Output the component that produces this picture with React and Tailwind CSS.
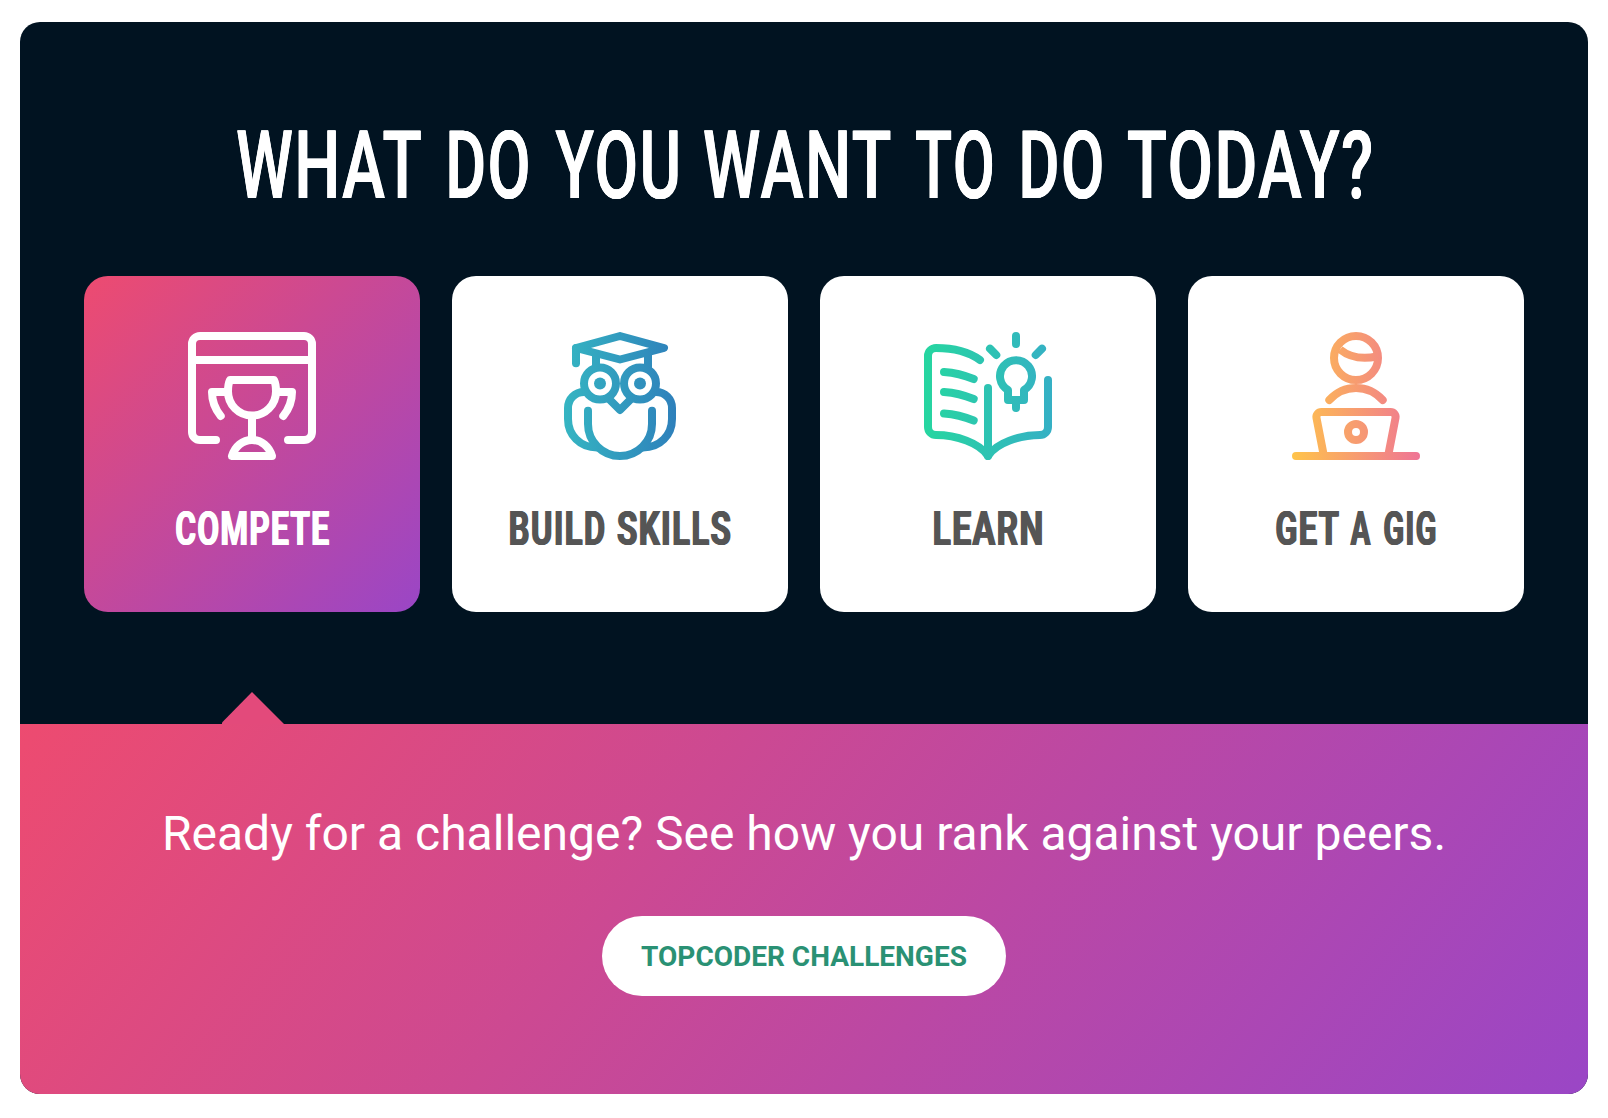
import { useLayoutEffect, useRef } from "react";

// Condenses a word so that its ink fills the width set by `className`.
// `edge` is the thickness in pixels that a text shadow adds to each side of a glyph.
function Word({ children, className, edge = 1 }) {
  const box = useRef(null);
  const glyphs = useRef(null);

  useLayoutEffect(() => {
    const style = getComputedStyle(glyphs.current);
    const ctx = document.createElement("canvas").getContext("2d");
    ctx.font = `${style.fontWeight} ${style.fontSize} ${style.fontFamily}`;
    const m = ctx.measureText(children);
    const spacing = (parseFloat(style.letterSpacing) || 0) * (children.length - 1);
    const left = m.actualBoundingBoxLeft + edge;
    const ink = left + m.actualBoundingBoxRight + edge + spacing;
    const width = box.current.getBoundingClientRect().width;
    glyphs.current.style.transform = `scaleX(${width / ink}) translateX(${left}px)`;
  }, [children, edge]);

  return (
    <span ref={box} className={`block shrink-0 ${className}`}>
      <span
        ref={glyphs}
        className="inline-block origin-left whitespace-nowrap"
        style={{ textShadow: `${edge}px 0 currentColor, ${-edge}px 0 currentColor` }}
      >
        {children}
      </span>
    </span>
  );
}

function Icon({ width = 128, id, from, to, children }) {
  return (
    <svg
      width={width}
      height="128"
      viewBox={`0 0 ${width} 128`}
      fill="none"
      stroke={id ? `url(#${id})` : "currentColor"}
      strokeWidth="8"
      strokeLinecap="round"
      strokeLinejoin="round"
    >
      {id && (
        <defs>
          <linearGradient id={id} gradientUnits="userSpaceOnUse" x1="0" y1="64" x2={width} y2="64">
            <stop stopColor={from} />
            <stop offset="1" stopColor={to} />
          </linearGradient>
        </defs>
      )}
      {children}
    </svg>
  );
}

function TrophyIcon() {
  return (
    <Icon>
      <path d="M28 108H12a8 8 0 0 1-8-8V12a8 8 0 0 1 8-8h104a8 8 0 0 1 8 8v88a8 8 0 0 1-8 8h-16" />
      <path d="M4 28h120" strokeLinecap="butt" />
      <path d="M42 48h44c1.500 3 2 7 2 11.500a24 24 0 0 1-48 0c0-4.500.5-8.500 2-11.500z" />
      <path d="M38 60H24c0 8.500 3 17 8.700 24M90 60h14c0 8.500-3 17-8.700 24" />
      <path d="M64 84v24" />
      <path d="M44 124h40c-3-9.500-10.500-16-20-16s-17 6.500-20 16z" />
    </Icon>
  );
}

function OwlIcon() {
  return (
    <Icon width={112} id="owl" from="#35b5c2" to="#2e80bb">
      <path d="M12 16L56 4l44 12-44 11.500z" />
      <path d="M12 31.300V16" />
      <path d="M32 21v18M84 21v18" strokeLinecap="butt" />
      <circle cx="36" cy="51.500" r="16" />
      <circle cx="76" cy="51.500" r="16" />
      <circle cx="36" cy="51.500" r="6" fill="url(#owl)" stroke="none" />
      <circle cx="76" cy="51.500" r="6" fill="url(#owl)" stroke="none" />
      <path d="M45 67l11 11 11-11" />
      <path d="M20 60C11 60 4 67 4 76v11c0 16 12 28.500 29 28.500M92 60c9 0 16 7 16 16v11c0 16-12 28.500-29 28.500" />
      <path d="M24 78.700V92a32 32 0 0 0 64 0V78.700" />
    </Icon>
  );
}

function BookIcon() {
  return (
    <Icon id="book" from="#26d6a0" to="#35b0c5">
      <path d="M56 28C45 20 28 16 12 16a8 8 0 0 0-8 8v71a8 8 0 0 0 8 8c20 0 44 8 52 21c8-13 32-21 52-21a8 8 0 0 0 8-8V48" />
      <path d="M64 56v68" />
      <path d="M20 40q15 1 29.700 7M20 60q15 1 29.700 7M20 81.500q15 1 29.700 7" />
      <path d="M84 68V58a16 16 0 1 1 16 0v10zM92 68v8" />
      <path d="M92 4v8M66 16.700l6.300 6.300M118 16.700l-6.300 6.300" />
    </Icon>
  );
}

function LaptopIcon() {
  return (
    <Icon id="laptop" from="#ffc44a" to="#ef7496">
      <circle cx="64" cy="26" r="22" />
      <path d="M48 17.500C56 24 68 28 85 24.500" strokeLinecap="butt" />
      <path d="M37.300 68C52 52 76 52 90.700 68" />
      <path d="M31.500 122L24.500 86a5 5 0 0 1 5-6h69a5 5 0 0 1 5 6L96.500 122" />
      <circle cx="64" cy="100" r="8" />
      <path d="M4 124h.1L124 124.010" />
    </Icon>
  );
}

function Card({ icon, active, children }) {
  return (
    <div
      className={`flex h-[336px] w-[336px] flex-col items-center rounded-3xl pt-14 ${
        active
          ? "bg-[linear-gradient(135deg,#ed4b70_0%,#9a46c6_100%)] text-white"
          : "bg-white text-[#555555]"
      }`}
    >
      {icon}
      <div className="mt-[41px] flex text-[48px] leading-[56px] font-bold tracking-[2px]">
        {children}
      </div>
    </div>
  );
}

export default function App() {
  return (
    <div className="h-[1118px] w-[1608px] bg-white px-5 pt-[22px] font-['Roboto',sans-serif]">
      <main className="h-[1072px] overflow-hidden rounded-[20px] bg-[#011321]">
        <section className="flex h-[702px] flex-col items-center pt-[88px]">
          <h1 className="flex text-[94.500px] leading-[112px] font-medium tracking-[2px] text-white">
            <Word edge={0.5} className="w-[184.100px]">WHAT</Word>
            <Word edge={0.5} className="ml-[27.900px] w-[79.200px]">DO</Word>
            <Word edge={0.5} className="ml-[26.800px] w-[123.200px]">YOU</Word>
            <Word edge={0.5} className="ml-[26.400px] w-[186.700px]">WANT</Word>
            <Word edge={0.5} className="ml-[24.900px] w-[76.500px]">TO</Word>
            <Word edge={0.5} className="ml-[29.500px] w-[80px]">DO</Word>
            <Word edge={0.5} className="ml-[25.500px] w-[243.500px]">TODAY?</Word>
          </h1>
          <div className="mt-[54px] flex gap-8">
            <Card icon={<TrophyIcon />} active>
              <Word className="w-[153px]">COMPETE</Word>
            </Card>
            <Card icon={<OwlIcon />}>
              <Word className="w-[95px]">BUILD</Word>
              <Word className="ml-[12.500px] w-[113.500px]">SKILLS</Word>
            </Card>
            <Card icon={<BookIcon />}>
              <Word className="w-[108px]">LEARN</Word>
            </Card>
            <Card icon={<LaptopIcon />}>
              <Word className="w-[63px]">GET</Word>
              <Word className="ml-[11px] w-[21.400px]">A</Word>
              <Word className="ml-[12px] w-[52px]">GIG</Word>
            </Card>
          </div>
        </section>
        <section className="relative flex h-[370px] flex-col items-center bg-[linear-gradient(128deg,#ed4b70_0%,#9a46c6_100%)] pt-[74px]">
          <svg className="absolute -top-8 left-[202px]" width="62" height="32" viewBox="0 0 62 32">
            <path d="M0 32V30.500L30 0L62 32z" fill="#e34a7b" />
          </svg>
          <p className="text-[48px] leading-[72px] whitespace-nowrap text-white">
            Ready for a challenge? See how you rank against your peers.
          </p>
          <button className="mt-[46px] h-20 w-[404px] rounded-full bg-white pt-0.5 text-[28px] font-bold whitespace-nowrap text-[#2a9174]">
            TOPCODER CHALLENGES
          </button>
        </section>
      </main>
    </div>
  );
}
